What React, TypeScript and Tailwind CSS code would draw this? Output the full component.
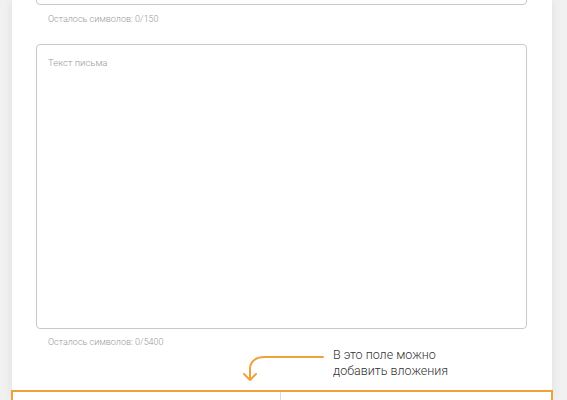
export default function App() {
  return (
    <div className="h-[400px] w-[567px] overflow-hidden bg-[#f1f1f1] flex" style={{ fontFamily: 'Roboto, "Liberation Sans", sans-serif' }}>
      <div className="ml-[12px] w-[540px] bg-white shadow-[0_0_10px_rgba(0,0,0,0.08)] flex flex-col">
        <div className="shrink-0 px-[24px] pr-[25px] flex flex-col">
          <div className="shrink-0 -mt-[35px] h-[40px] border border-[#c9c9c9] rounded-[4px]" />
          <div className="mt-[8px] pl-[12px] text-[9px] leading-[12px] font-light text-[#999]">Осталось символов: 0/150</div>
          <div className="shrink-0 mt-[19px] h-[285px] border border-[#c9c9c9] rounded-[4px] px-[11px] pt-[12px]">
            <div className="text-[9.5px] leading-[12px] font-light text-[#999]">Текст письма</div>
          </div>
          <div className="mt-[7px] pl-[12px] text-[9px] leading-[12px] font-light text-[#999]">Осталось символов: 0/5400</div>
        </div>
        <div className="shrink-0 flex h-[42px] items-start">
          <svg width="96" height="36" viewBox="0 0 96 36" className="ml-[219px]" fill="none" stroke="#eda23a" strokeWidth="2" strokeLinecap="round" strokeLinejoin="round">
            <path d="M92 9 H34 C26 9 20 12 19 20 V31" />
            <path d="M13 26 L19 32 L25 26" />
          </svg>
          <div className="ml-[6px] mt-[-1px] text-[12.5px] leading-[16px] font-light text-[#333]">
            В это поле можно<br />добавить вложения
          </div>
        </div>
        <div className="shrink-0 -ml-px w-[542px] h-[20px] border-2 border-[#eda23a] border-b-0 flex">
          <div className="w-[268px] border-r border-[#dcdcdc]" />
        </div>
      </div>
    </div>
  );
}
